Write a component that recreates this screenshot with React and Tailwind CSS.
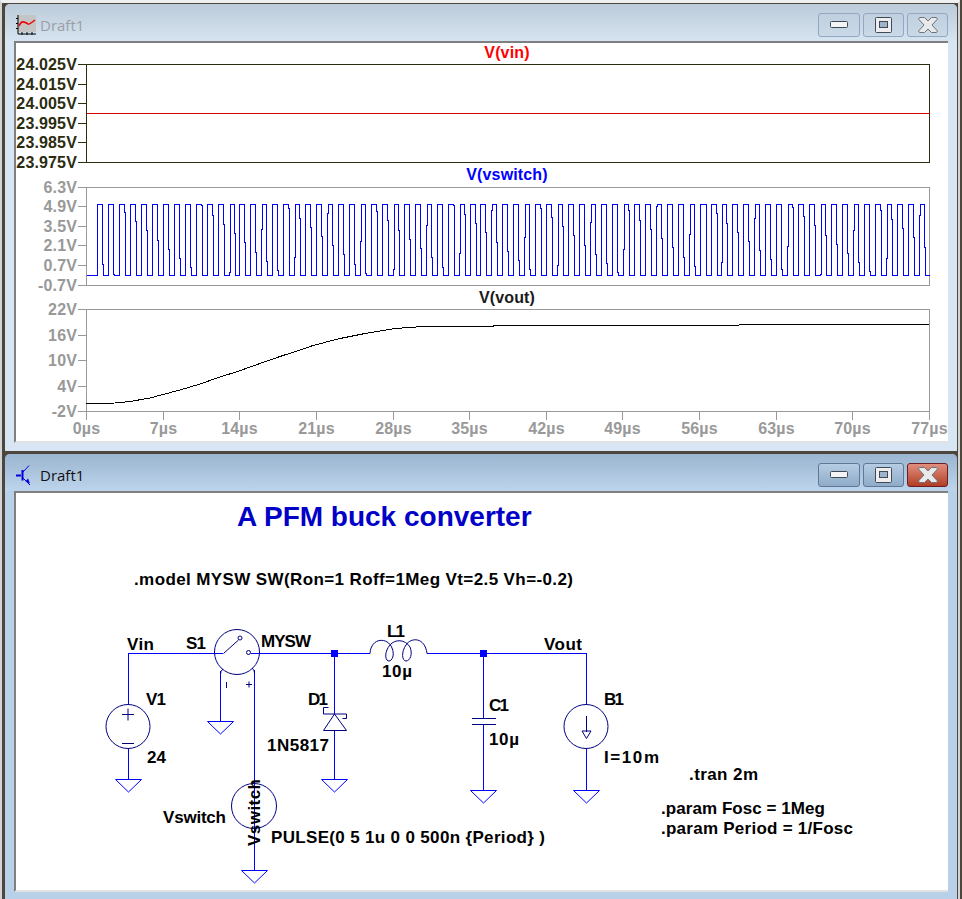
import React from 'react';

// tick positions shared by the three plot panes
const X_TICKS = Array.from({ length: 12 }, (_, i) => ({
  x: Math.round(86 + i * 76.64) + 0.5,
  label: `${i * 7}µs`,
}));

const PANES = [
  {
    top: 64.5, bottom: 162.5, dark: true, title: 'V(vin)', titleY: 58, titleClass: 'fill-[#ff0000]',
    ticks: [[64.5, '24.025V'], [84.5, '24.015V'], [103.5, '24.005V'], [123.5, '23.995V'], [142.5, '23.985V'], [162.5, '23.975V']],
  },
  {
    top: 187.5, bottom: 285.5, title: 'V(vswitch)', titleY: 180, titleClass: 'fill-[#0000ff]',
    ticks: [[187.5, '6.3V'], [206.5, '4.9V'], [226.5, '3.5V'], [245.5, '2.1V'], [265.5, '0.7V'], [285.5, '-0.7V']],
  },
  {
    top: 309.5, bottom: 411.5, title: 'V(vout)', titleY: 303, titleClass: 'fill-[#1a1a1a]',
    ticks: [[309.5, '22V'], [335.5, '16V'], [360.5, '10V'], [386.5, '4V'], [411.5, '-2V']],
  },
];

const VOUT_POINTS = [
  [86, 403.5], [115, 403], [130, 401.5], [150, 398], [163, 394.5], [180, 390], [200, 384], [220, 377],
  [239, 371], [260, 363.5], [280, 356.5], [300, 350], [313, 345.5], [340, 338.5], [365, 333.5], [395, 328.5],
  [423, 326.5], [493, 326.5], [494, 325.5], [738, 325.5], [740, 324.5], [929, 324.5],
];

// the pulse source is sampled coarsely, so its edges pick up little steps
const switchWave = () => {
  let d = 'M86.5 275.5 H97.5';
  for (let i = 0; i < 76; i++) {
    const x = 97.5 + i * 10.955;
    const stepY = 204.5 + ((i * 0.13 + 0.85) % 1) * 71;
    const riseY = 204.5 + ((i * 0.13 + 0.4) % 1) * 71;
    if (i > 10 && i % 3 === 0) {
      d += ` V${riseY.toFixed(1)} H${(x + 1).toFixed(1)} V204.5`;
    } else {
      d += ` V204.5`;
    }
    d += ` H${(x + 5).toFixed(1)} V${stepY.toFixed(1)} H${(x + 6).toFixed(1)} V275.5`;
    d += i === 75 ? ' H929.5' : ` H${(x + 10.955).toFixed(1)}`;
  }
  return d;
};

const MinimizeIcon = () => (
  <svg width="18" height="8" viewBox="0 0 18 8">
    <rect x="0.5" y="0.5" width="17" height="6" rx="1" fill="#f4f4f4" stroke="#3f4a58" />
  </svg>
);

const MaximizeIcon = () => (
  <svg width="17" height="16" viewBox="0 0 17 16">
    <rect x="0.5" y="0.5" width="16" height="15" rx="1" fill="#eeeeee" stroke="#3f4a58" />
    <rect x="4.5" y="4.5" width="8" height="6" fill="#9db4cc" stroke="#3f4a58" />
  </svg>
);

const CloseIcon = () => (
  <svg width="20" height="16" viewBox="0 0 20 16">
    <path
      d="M1.5 0.5 H6.5 L10 4 L13.5 0.5 H18.5 L19.5 2 L14 8 L19.5 14 L18.5 15.5 H13.5 L10 12 L6.5 15.5 H1.5 L0.5 14 L6 8 L0.5 2 Z"
      fill="#e9e9e9"
      stroke="#6b7480"
    />
  </svg>
);

const WindowButton = ({ children, className }) => (
  <div className={`flex items-center justify-center h-[24px] rounded-[3px] border ${className}`}>{children}</div>
);

const PlotIcon = () => (
  <svg width="20" height="20" viewBox="0 0 20 20" className="block">
    <rect x="2" y="0" width="18" height="17" fill="#c4c4c4" />
    <path d="M2 0 V19 H20" fill="none" stroke="#000" />
    <path d="M0 3.5 H2 M0 8.5 H2 M0 13.5 H2 M6 17 V20 M11 17 V20 M16 17 V20" stroke="#000" />
    <path d="M3 11 Q5 6 8 7 T12 9 T19 5" fill="none" stroke="#f00000" strokeWidth="1.6" />
  </svg>
);

const TransistorIcon = () => (
  <svg width="16" height="21" viewBox="0 0 16 21" className="block">
    <path d="M0 10.5 H5 M6.5 5 V15.5" stroke="#0000e0" strokeWidth="2" />
    <path d="M7 7 L13 0.5 M7 13 L14 20" stroke="#0000e0" />
    <path d="M14 18.5 L9.5 16.5 L12 13.5 Z" fill="#0000e0" />
  </svg>
);

const TitleBar = ({ active, icon }) => (
  <div
    className={`h-[37px] flex items-center shrink-0 rounded-t-[5px] pt-[5px] pl-[11px] pr-[9px] ${
      active ? 'bg-gradient-to-b from-[#9bb5d0] to-[#bdd4ec]' : 'bg-gradient-to-b from-[#bccbd9] to-[#d6e4f1]'
    }`}
  >
    <div className="w-[24px] shrink-0">{icon}</div>
    <span className={`font-['Open_Sans',sans-serif] text-[15px] ${active ? 'text-[#111111]' : 'text-[#9a9fa6]'}`}>
      Draft1
    </span>
    <div className="ml-auto flex gap-[3px]">
      <WindowButton
        className={`w-[42px] ${
          active
            ? 'border-[#5f7896] bg-gradient-to-b from-[#b6cde4] to-[#8fabc8]'
            : 'border-[#93a7c2] bg-gradient-to-b from-[#c0d0df] to-[#c9d9e8]'
        }`}
      >
        <MinimizeIcon />
      </WindowButton>
      <WindowButton
        className={`w-[41px] ${
          active
            ? 'border-[#5f7896] bg-gradient-to-b from-[#b6cde4] to-[#8fabc8]'
            : 'border-[#93a7c2] bg-gradient-to-b from-[#c0d0df] to-[#c9d9e8]'
        }`}
      >
        <MaximizeIcon />
      </WindowButton>
      <WindowButton
        className={`w-[41px] ${
          active
            ? 'border-[#6b1f25] bg-gradient-to-b from-[#e08f7f] to-[#b23c22]'
            : 'border-[#93a7c2] bg-gradient-to-b from-[#c0d0df] to-[#c9d9e8]'
        }`}
      >
        <CloseIcon />
      </WindowButton>
    </div>
  </div>
);

const Window = ({ active, icon, height, children }) => (
  <div className={`flex flex-col rounded-t-[5px] ${height} ${active ? 'bg-[#b9d0e9]' : 'bg-[#d8e5f2]'}`}>
    <TitleBar active={active} icon={icon} />
    <div className="ml-[9px] mr-[9px] border-t-2 border-l-2 border-t-[#7f7f7f] border-l-[#7f7f7f] border-b-2 border-b-[#e2e2e2] bg-white">
      {children}
    </div>
  </div>
);

const PlotPane = ({ pane }) => {
  const axisColor = pane.dark ? 'stroke-[#2c2c10]' : 'stroke-[#999999]';
  return (
    <g>
      <text x="507" y={pane.titleY} textAnchor="middle" className={pane.titleClass}>
        {pane.title}
      </text>
      <rect x="86.5" y={pane.top} width="843" height={pane.bottom - pane.top} fill="none" className={axisColor} />
      {pane.ticks.map(([y, label]) => (
        <g key={label}>
          <path d={`M78 ${y} H86`} className={axisColor} />
          <text x="77" y={Math.floor(y) + 6} textAnchor="end" className={pane.dark ? 'fill-[#2c2c10]' : 'fill-[#999999]'}>
            {label}
          </text>
        </g>
      ))}
    </g>
  );
};

const WaveformPlot = () => (
  <svg
    viewBox="16 43 932 398"
    width="932"
    height="398"
    className="block font-['Liberation_Sans',Arial,sans-serif] font-bold text-[16px] tracking-[0.15px]"
  >
    {PANES.map((pane) => (
      <PlotPane key={pane.title} pane={pane} />
    ))}
    <path d="M86.5 113.5 H929.5" stroke="#e00000" fill="none" shapeRendering="crispEdges" />
    <path d={switchWave()} stroke="#0000ff" fill="none" strokeWidth="1" shapeRendering="crispEdges" />
    <polyline
      points={VOUT_POINTS.map((p) => p.join(',')).join(' ')}
      fill="none"
      stroke="#000000"
      strokeWidth="1"
      shapeRendering="crispEdges"
    />
    {X_TICKS.map((tick) => (
      <g key={tick.label}>
        <path d={`M${tick.x} 411 V420`} stroke="#999999" />
        <text x={tick.x} y="434" textAnchor="middle" className="fill-[#999999]">
          {tick.label}
        </text>
      </g>
    ))}
  </svg>
);

const Ground = ({ x, y }) => <path d={`M${x - 13} ${y} H${x + 13} L${x} ${y + 12.5} Z`} fill="none" stroke="#0000ff" />;

// w is the width the label takes in the reference, the bold text there runs a bit wider than Liberation
const Label = ({ x, y, w, children }) => (
  <text x={x} y={y} textLength={w} className="fill-black">
    {children}
  </text>
);

const Schematic = () => (
  <svg
    viewBox="16 493 932 397"
    width="932"
    height="397"
    className="block font-['Liberation_Sans',Arial,sans-serif] font-bold text-[17px]"
  >
    {/* wires */}
    <g stroke="#0000ff" fill="none" shapeRendering="crispEdges">
      <path d="M128.5 704 V653.5 H223" />
      <path d="M128.5 749 V780" />
      <path d="M250.5 653.5 H370" />
      <path d="M334.5 653 V714 M334.5 730 V780" />
      <path d="M427 653.5 H586.5 V704 M586.5 749 V790" />
      <path d="M483.5 653 V718 M483.5 725 V790" />
      <path d="M220.5 671 V721 M254.5 670 V870" />
    </g>
    <rect x="331" y="650" width="7" height="7" fill="#0000ff" />
    <rect x="480" y="650" width="7" height="7" fill="#0000ff" />

    {/* grounds */}
    <Ground x={128.5} y={779.5} />
    <Ground x={220.5} y={721.5} />
    <Ground x={254.5} y={870.5} />
    <Ground x={334.5} y={779.5} />
    <Ground x={483.5} y={790.5} />
    <Ground x={586.5} y={790.5} />

    {/* component bodies */}
    <g stroke="#000080" fill="none">
      <circle cx="128" cy="726.5" r="22" />
      <path d="M122 714.5 H134 M128 708.5 V720.5 M122 743.5 H134" />
      <circle cx="237" cy="652" r="22.5" />
      <path d="M223.5 653.5 L238.5 640" />
      <circle cx="240" cy="638" r="2" />
      <circle cx="248.5" cy="652.5" r="2" />
      <path d="M223 669 Q220.5 671 220.5 674 M252 668 Q254.5 670 254.5 673" />
      <path d="M226.5 682 V688 M246 684.5 H252 M249 681.5 V687.5" />
      <circle cx="254" cy="806" r="22.5" />
      <path d="M334.5 714 L323.5 730.5 H346.5 Z" />
      <path d="M328.5 707.5 H323.5 V714 H346.5 V718.5 H342.5" />
      <path d="M370 653.5 C371 637 388 637 392 648 C395 655 392 661 389 661 C385 661 384 652 390 645 C395 639 405 639 410 647 C413 654 410 661 406 661 C402 661 401 652 406 645 C411 637 425 637 427 653.5" />
      <path d="M472 718.5 H496 M472 724.5 H496" />
      <circle cx="586" cy="726.5" r="22" />
      <path d="M586.5 716 V732 M582 731 H591 L586.5 738.5 Z" />
    </g>

    {/* labels */}
    <text x="237" y="526" className="fill-[#0000c8] text-[28px]">
      A PFM buck converter
    </text>
    <Label x="134" y="585" w="439">.model MYSW SW(Ron=1 Roff=1Meg Vt=2.5 Vh=-0.2)</Label>
    <Label x="127" y="650" w="27">Vin</Label>
    <Label x="186" y="649" w="20">S1</Label>
    <Label x="261" y="647" w="50">MYSW</Label>
    <Label x="387" y="637" w="18">L1</Label>
    <Label x="544" y="650" w="38">Vout</Label>
    <Label x="382" y="677" w="30">10µ</Label>
    <Label x="146" y="705" w="20">V1</Label>
    <Label x="147" y="763" w="19">24</Label>
    <Label x="308" y="705" w="20">D1</Label>
    <Label x="267" y="751" w="62">1N5817</Label>
    <Label x="489" y="711" w="20">C1</Label>
    <Label x="489" y="745" w="30">10µ</Label>
    <Label x="604" y="705" w="20">B1</Label>
    <Label x="604" y="763" w="55">I=10m</Label>
    <Label x="689" y="780" w="69">.tran 2m</Label>
    <Label x="661" y="814" w="164">.param Fosc = 1Meg</Label>
    <Label x="661" y="834" w="192">.param Period = 1/Fosc</Label>
    <Label x="163" y="823" w="63">Vswitch</Label>
    <Label x="271" y="843" w="274">PULSE(0 5 1u 0 0 500n {'{Period}'} )</Label>
    <text x="260" y="846" textLength="67" transform="rotate(-90 260 846)" className="fill-black">
      Vswitch
    </text>
  </svg>
);

export default function App() {
  return (
    <div className="w-[962px] h-[899px] overflow-hidden bg-[#4d463c] pr-[2px]">
      <div className="h-full border-t-[3px] border-t-[#f0f0f0] border-x-2 border-x-[#d4d4d4] pl-[3px] pr-[1px] pt-[1px] flex flex-col gap-[3px]">
        <Window icon={<PlotIcon />} height="h-[447px]">
          <WaveformPlot />
        </Window>
        <Window active icon={<TransistorIcon />} height="h-[445px]">
          <Schematic />
        </Window>
      </div>
    </div>
  );
}
